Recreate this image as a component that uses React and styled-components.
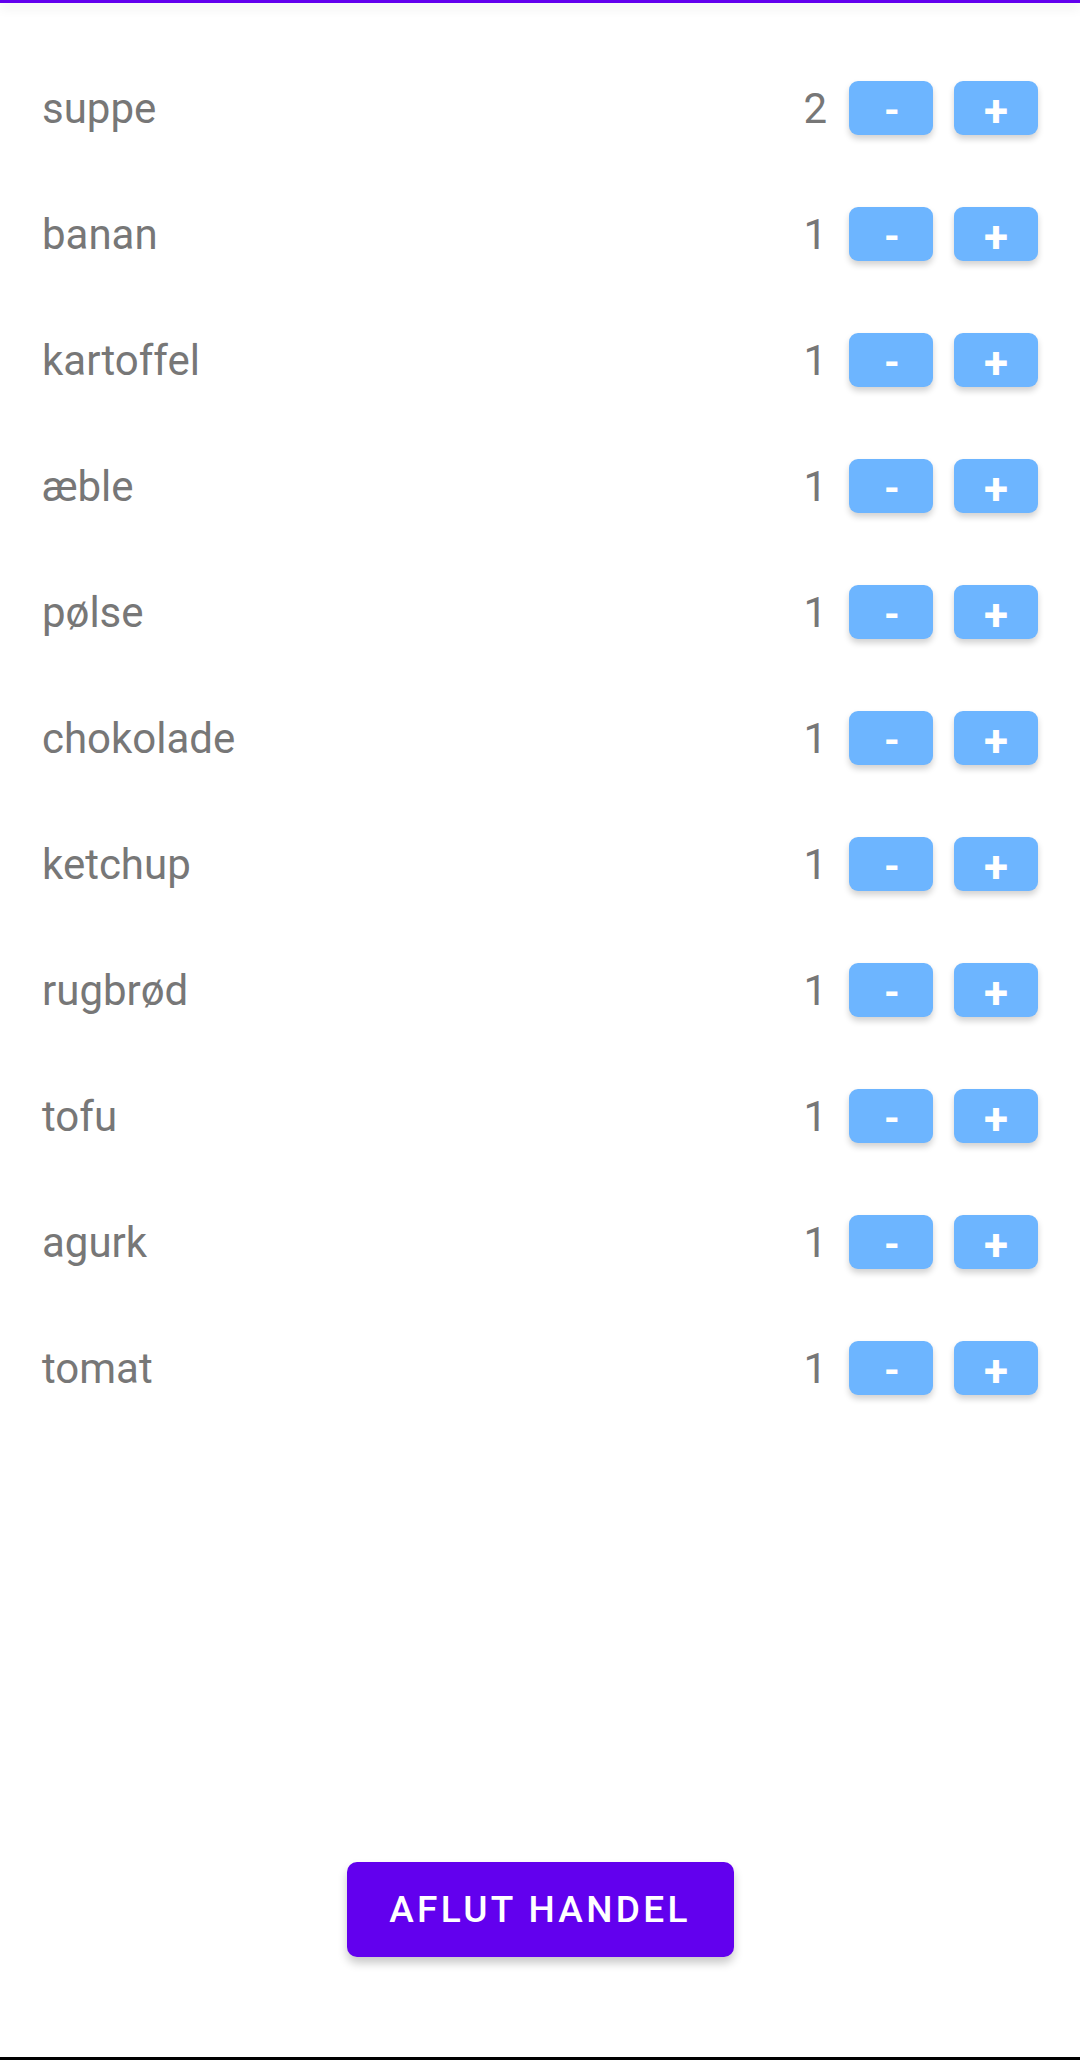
import React from 'react'
import styled, { createGlobalStyle } from 'styled-components'

const items = [
  { name: 'suppe', count: 2 },
  { name: 'banan', count: 1 },
  { name: 'kartoffel', count: 1 },
  { name: 'æble', count: 1 },
  { name: 'pølse', count: 1 },
  { name: 'chokolade', count: 1 },
  { name: 'ketchup', count: 1 },
  { name: 'rugbrød', count: 1 },
  { name: 'tofu', count: 1 },
  { name: 'agurk', count: 1 },
  { name: 'tomat', count: 1 },
]

const GlobalStyle = createGlobalStyle`
  html, body {
    margin: 0;
    padding: 0;
    background: #fff;
  }
  body {
    font-family: Roboto, 'Noto Sans', sans-serif;
  }
`

export default function App() {
  return (
    <>
      <GlobalStyle />
      <Page>
        <TopBar />
        <List>
          {items.map((item) => (
            <Row key={item.name}>
              <Name>{item.name}</Name>
              <Count>{item.count}</Count>
              <StepButton $minus>-</StepButton>
              <StepButton>+</StepButton>
            </Row>
          ))}
        </List>
        <Footer>
          <FinishButton>Aflut handel</FinishButton>
        </Footer>
        <BottomBar />
      </Page>
    </>
  )
}

const Page = styled.div`
  height: 2060px;
  display: flex;
  flex-direction: column;
  background: #fff;
  overflow: hidden;
`

const TopBar = styled.div`
  flex: none;
  height: 3px;
  background: #6200ee;
  box-shadow: 0 4px 12px rgba(0, 0, 0, 0.14);
  position: relative;
  z-index: 1;
`

const List = styled.div`
  display: flex;
  flex-direction: column;
  padding: 42px 42px 0 42px;
`

const Row = styled.div`
  height: 126px;
  display: flex;
  align-items: center;
`

const Name = styled.span`
  flex: 1;
  font-size: 42px;
  color: #777;
`

const Count = styled.span`
  font-size: 42px;
  color: #777;
  margin-right: 22px;
`

const StepButton = styled.button`
  width: 84px;
  height: 54px;
  margin-left: ${(p) => (p.$minus ? '0' : '21px')};
  border: none;
  border-radius: 9px;
  background: #6db5ff;
  color: #fff;
  font-family: Roboto, sans-serif;
  font-weight: 700;
  font-size: ${(p) => (p.$minus ? '40px' : '44px')};
  line-height: 1;
  padding: 6px 0 0 ${(p) => (p.$minus ? '2px' : '0')};
  display: flex;
  align-items: center;
  justify-content: center;
  box-shadow: 0 4px 6px rgba(0, 0, 0, 0.18);
`

const Footer = styled.div`
  margin-top: auto;
  display: flex;
  justify-content: center;
  padding-bottom: 100px;
`

const FinishButton = styled.button`
  width: 387px;
  height: 95px;
  border: none;
  border-radius: 10px;
  background: #6200ee;
  color: #fff;
  font-family: Roboto, sans-serif;
  font-weight: 500;
  font-size: 37px;
  letter-spacing: 0.09em;
  text-transform: uppercase;
  box-shadow: 0 6px 10px rgba(0, 0, 0, 0.22);
`

const BottomBar = styled.div`
  flex: none;
  height: 3px;
  background: #000;
`
